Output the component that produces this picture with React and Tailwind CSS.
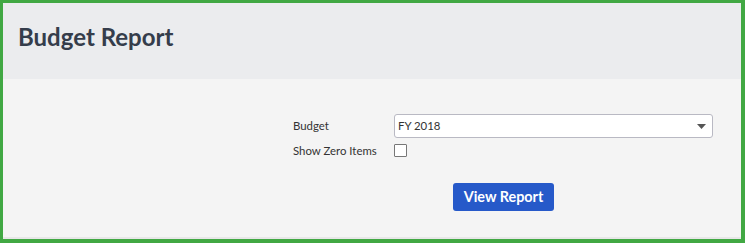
import React from 'react';

const App = () => {
  return (
    <div className="w-[745px] h-[243px] bg-[#f4f4f4] border-[#41a843] border-t-[3px] border-l-[3px] border-r-[4px] border-b-[4px] flex flex-col font-['Lato','Liberation_Sans',sans-serif] text-[#333]">
      <div className="h-[76px] bg-[#ebecee] px-[15px] pt-[20px] shrink-0">
        <h1 className="text-[24px] leading-[28.8px] font-bold text-[#353d4b]">Budget Report</h1>
      </div>

      <div className="flex-1 border-b-2 border-[#e7e7e7] pt-[35px] pl-[290px]">
        <div className="flex items-center h-[24px]">
          <label className="w-[101px] text-[11.4px]">Budget</label>
          <div className="relative w-[319px] h-[24px] bg-white border border-[#b9b9c3] rounded-[3px] flex items-center pl-[3px] text-[11.4px]">
            <span>FY 2018</span>
            <svg className="absolute right-[6px] top-[9px]" width="9" height="5" viewBox="0 0 9 5">
              <path d="M0 0 L9 0 L4.5 5 Z" fill="#555" />
            </svg>
          </div>
        </div>

        <div className="flex items-center mt-[6px] h-[13px]">
          <label className="w-[101px] text-[11.4px]">Show Zero Items</label>
          <span className="w-[13px] h-[13px] bg-white border border-[#777] rounded-[1px]"></span>
        </div>

        <div className="mt-[26px] pl-[160px]">
          <button className="w-[101px] h-[28px] bg-[#2659c9] rounded-[3px] text-white text-[14.4px] font-bold">
            View Report
          </button>
        </div>
      </div>
    </div>
  );
};

export default App;
